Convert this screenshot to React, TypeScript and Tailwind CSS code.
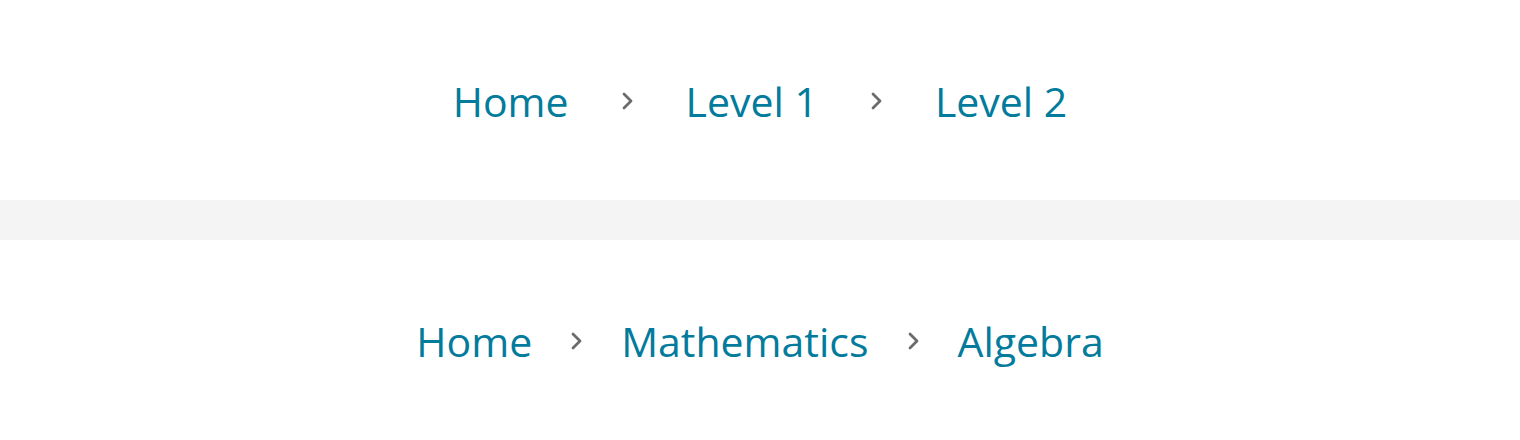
import React from "react";

const Chevron = () => (
  <svg width="13" height="22" viewBox="0 0 13 22" className="shrink-0" aria-hidden>
    <path d="M3 4 L10 11 L3 18" fill="none" stroke="#6b6b6b" strokeWidth="2.8" strokeLinecap="round" strokeLinejoin="round" />
  </svg>
);

interface BreadcrumbProps {
  items: string[];
  gap: string;
}

const Breadcrumb: React.FC<BreadcrumbProps> = ({ items, gap }) => (
  <nav className={`flex items-center ${gap}`}>
    {items.map((label, i) => (
      <React.Fragment key={label + i}>
        {i > 0 && <Chevron />}
        <a href="#" className="text-[41px] leading-none text-[#027b9c] no-underline">
          {label}
        </a>
      </React.Fragment>
    ))}
  </nav>
);

export default function App() {
  return (
    <div className="w-full bg-white" style={{ fontFamily: '"Open Sans", sans-serif' }}>
      <section className="flex h-[200px] items-center justify-center pt-0.5">
        <Breadcrumb items={["Home", "Level 1", "Level 2"]} gap="gap-[52px]" />
      </section>
      <div className="h-10 bg-[#f4f4f4]" />
      <section className="flex h-[200px] items-center justify-center pt-0.5">
        <Breadcrumb items={["Home", "Mathematics", "Algebra"]} gap="gap-[38px]" />
      </section>
    </div>
  );
}
